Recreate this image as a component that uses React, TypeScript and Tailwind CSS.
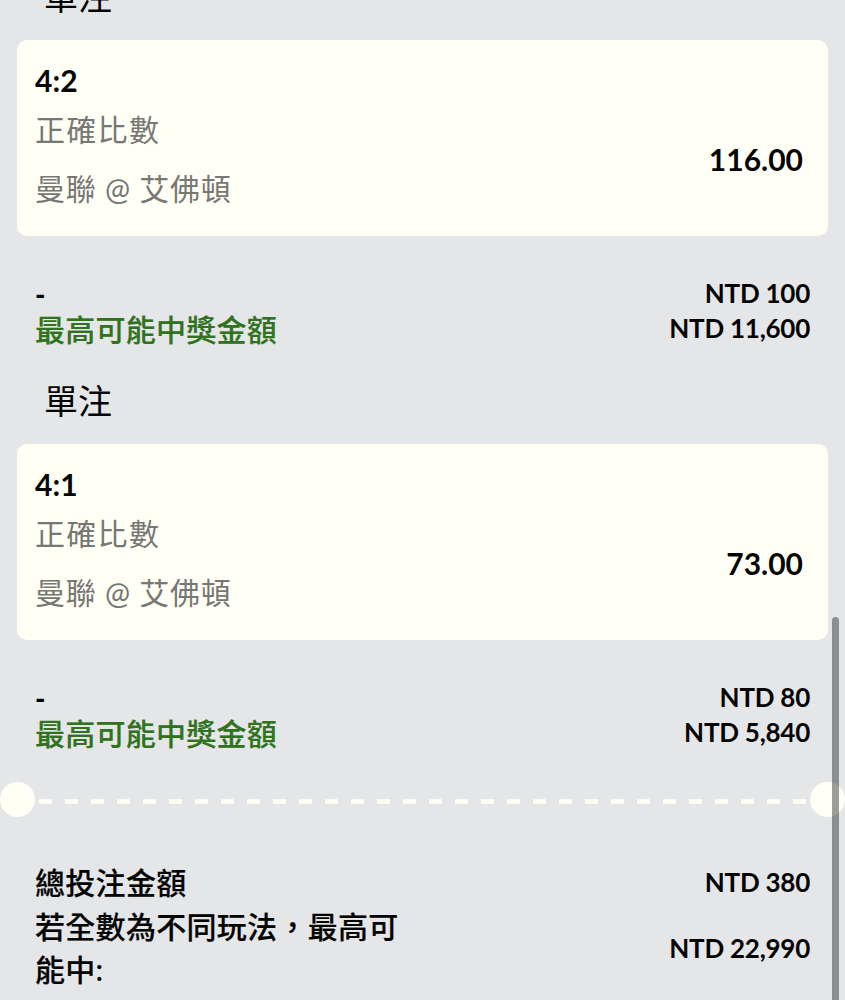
import React from 'react';

interface Bet {
  score: string;
  odds: string;
  stake: string;
  payout: string;
}

const bets: Bet[] = [
  { score: '4:2', odds: '116.00', stake: 'NTD 100', payout: 'NTD 11,600' },
  { score: '4:1', odds: '73.00', stake: 'NTD 80', payout: 'NTD 5,840' },
];

const BetItem = ({ bet }: { bet: Bet }) => (
  <section className="h-[404px]">
    <h2 className="h-[67px] pl-[44px] text-[34px] leading-[48px] whitespace-nowrap">單注</h2>
    <div className="mx-[17px] flex h-[196px] items-center justify-between rounded-[10px] bg-[#fffff6] pr-[25px] pl-[18px]">
      <div className="h-[196px] pt-[20px]">
        <p className="h-[41px] text-[30px] leading-[40px] font-bold">{bet.score}</p>
        <p className="h-[58px] text-[30px] leading-[56px] tracking-[1.3px] text-[#777773]">正確比數</p>
        <p className="h-[58px] text-[30px] leading-[58px] tracking-[0.75px] text-[#777773]">曼聯 @ 艾佛頓</p>
      </div>
      <p className="pt-[42px] text-[30px] leading-[40px] font-bold">{bet.odds}</p>
    </div>
    <div className="flex justify-between pt-[40px] pr-[35px] pl-[35px] text-[26px] leading-[35px] font-bold">
      <div>
        <p className="h-[36px] text-[28px] leading-[37px] font-black">-</p>
        <p className="text-[30px] font-medium tracking-[0.25px] text-[#317220] [-webkit-text-stroke:0.2px]">最高可能中獎金額</p>
      </div>
      <div className="text-right tracking-[-0.25px]">
        <p>{bet.stake}</p>
        <p>{bet.payout}</p>
      </div>
    </div>
  </section>
);

const App = () => {
  return (
    <div className="relative h-[1000px] w-[845px] overflow-hidden bg-[#e4e6e8] font-['Lato','Noto_Sans_CJK_TC',sans-serif] text-[#050505]">
      <div className="-mt-[27px]">
        {bets.map((bet) => (
          <BetItem key={bet.score} bet={bet} />
        ))}
      </div>

      {/* Ticket tear line */}
      <div className="flex h-[36px] items-center justify-between">
        <span className="size-[35px] rounded-full bg-[#fffff6]" />
        <svg className="mt-[4px] h-[5px] w-[771px]" viewBox="0 0 771 5">
          <line x1="2" y1="2.5" x2="771" y2="2.5" stroke="#fffff6" strokeWidth="4.5" strokeDasharray="13 13" />
        </svg>
        <span className="size-[35px] rounded-full bg-[#fffff6]" />
      </div>

      <div className="px-[35px] pt-[44px] text-[30px] leading-[43.5px] font-medium tracking-[0.3px]">
        <div className="flex justify-between">
          <p className="[-webkit-text-stroke:0.2px]">總投注金額</p>
          <p className="text-[26px] font-bold tracking-[-0.25px]">NTD 380</p>
        </div>
        <div className="flex items-center justify-between">
          <p className="w-[370px] [-webkit-text-stroke:0.2px]">若全數為不同玩法，最高可能中:</p>
          <p className="pt-[2px] text-[26px] font-bold tracking-[-0.25px]">NTD 22,990</p>
        </div>
      </div>

      {/* Scrollbar thumb */}
      <div className="absolute top-[617px] right-[6px] h-[400px] w-[7px] rounded-full bg-black/38" />
    </div>
  );
};

export default App;
